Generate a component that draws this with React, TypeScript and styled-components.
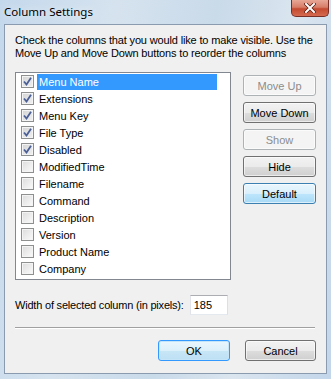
import React from "react"
import styled, { createGlobalStyle } from "styled-components"

const GlobalStyle = createGlobalStyle`
    html, body {
        margin: 0;
        padding: 0;
    }
    body {
        font-family: "Liberation Sans", Arial, sans-serif;
        font-size: 11px;
    }
`

const Frame = styled.div`
    width: 331px;
    height: 379px;
    box-sizing: border-box;
    display: flex;
    flex-direction: column;
    padding: 0 4px 5px 4px;
    background: linear-gradient(100deg, #c4d8ec 0%, #d6e3ef 30%, #c9dae9 55%, #dae5ef 75%, #c3d6ea 100%);
    overflow: hidden;
`

const TitleBar = styled.div`
    height: 24px;
    display: flex;
    justify-content: space-between;
    align-items: flex-start;
    flex-shrink: 0;
`

const Title = styled.span`
    font-family: "Noto Sans", "Open Sans", sans-serif;
    font-size: 11.5px;
    color: #000;
    margin-top: 4px;
    text-shadow: 0 0 8px rgba(255, 255, 255, 0.9);
`

const CloseButton = styled.div`
    width: 38px;
    height: 17px;
    margin-right: -2px;
    box-sizing: border-box;
    border: 1px solid #7a2f26;
    border-top: none;
    border-radius: 0 0 5px 5px;
    background: linear-gradient(#e8a796 0%, #d77d68 45%, #c44a30 55%, #d46a50 100%);
    display: flex;
    align-items: center;
    justify-content: center;
`

const Client = styled.div`
    flex: 1;
    min-height: 0;
    background: #f0f0f0;
    border: 1px solid #8a9bb0;
    display: flex;
    flex-direction: column;
    padding: 9px 10px 0 10px;
`

const Instructions = styled.p`
    margin: 0;
    font-size: 11px;
    line-height: 13px;
    letter-spacing: -0.15px;
    white-space: nowrap;
    color: #000;
`

const MainRow = styled.div`
    display: flex;
    gap: 12px;
    margin-top: 12px;
`

const ListBox = styled.div`
    width: 218px;
    height: 208px;
    box-sizing: border-box;
    background: #fff;
    border: 1px solid #828790;
    padding: 0 0 0 5px;
`

const Row = styled.div`
    height: 17px;
    display: flex;
    align-items: center;
`

const Box = styled.div<{ $checked?: boolean }>`
    width: 13px;
    height: 13px;
    box-sizing: border-box;
    border: 1px solid #8e8f8f;
    background: ${(p) =>
        p.$checked ? "linear-gradient(135deg, #d4d4d4, #f0f0f0)" : "linear-gradient(135deg, #dcdcdc, #fbfbfb)"};
    box-shadow: inset 0 0 0 1px #f4f4f4;
    display: flex;
    align-items: center;
    justify-content: center;
    flex-shrink: 0;
`

const Label = styled.span<{ $selected?: boolean }>`
    margin-left: 3px;
    padding: 0 2px;
    height: 16px;
    line-height: 16px;
    width: 176px;
    background: ${(p) => (p.$selected ? "#3399ff" : "transparent")};
    color: ${(p) => (p.$selected ? "#fff" : "#000")};
`

const ButtonColumn = styled.div`
    display: flex;
    flex-direction: column;
    gap: 6px;
    padding-top: 3px;
`

type Variant = "normal" | "disabled" | "hot" | "default"

const borders: Record<Variant, string> = {
    normal: "#707070",
    disabled: "#adb2b5",
    hot: "#3c7fb1",
    default: "#3399ff",
}

const fills: Record<Variant, string> = {
    normal: "linear-gradient(#f2f2f2 0%, #ebebeb 50%, #dddddd 51%, #cfcfcf 100%)",
    disabled: "#f4f4f4",
    hot: "linear-gradient(#eaf6fd 0%, #d9f0fc 50%, #bee6fd 51%, #a7d9f5 100%)",
    default: "linear-gradient(#eaf6fd 0%, #dcf0fb 50%, #c8e6f6 51%, #bde0f3 100%)",
}

const Button = styled.button<{ $variant?: Variant; $width?: number }>`
    width: ${(p) => p.$width ?? 73}px;
    height: 21px;
    box-sizing: border-box;
    font-family: "Liberation Sans", Arial, sans-serif;
    font-size: 11px;
    padding: 0;
    border-radius: 3px;
    border: 1px solid ${(p) => borders[p.$variant ?? "normal"]};
    color: ${(p) => (p.$variant === "disabled" ? "#8c8c8c" : "#000")};
    background: ${(p) => fills[p.$variant ?? "normal"]};
    box-shadow: inset 0 0 0 1px ${(p) => (p.$variant === "default" ? "#c6e4f8" : "rgba(255,255,255,0.6)")};
`

const WidthRow = styled.div`
    display: flex;
    align-items: center;
    margin-top: 15px;
    height: 20px;
`

const WidthLabel = styled.span`
    letter-spacing: -0.2px;
`

const WidthInput = styled.div`
    width: 38px;
    height: 20px;
    box-sizing: border-box;
    margin-left: 6px;
    background: #fff;
    border: 1px solid #abadb3;
    border-left-color: #e2e3ea;
    border-right-color: #dbdfe6;
    border-bottom-color: #e3e9ef;
    padding-left: 3px;
    line-height: 18px;
`

const Separator = styled.div`
    margin-top: 12px;
    height: 0;
    border-top: 1px solid #a0a0a0;
    border-bottom: 1px solid #fff;
    margin-right: 1px;
`

const Footer = styled.div`
    display: flex;
    justify-content: flex-end;
    gap: 15px;
    margin-top: 11px;
`

const columns = [
    { name: "Menu Name", checked: true },
    { name: "Extensions", checked: true },
    { name: "Menu Key", checked: true },
    { name: "File Type", checked: true },
    { name: "Disabled", checked: true },
    { name: "ModifiedTime", checked: false },
    { name: "Filename", checked: false },
    { name: "Command", checked: false },
    { name: "Description", checked: false },
    { name: "Version", checked: false },
    { name: "Product Name", checked: false },
    { name: "Company", checked: false },
]

function Check() {
    return (
        <svg width="9" height="9" viewBox="0 0 9 9">
            <path d="M1 4.5 L3.5 7.5 L8 0.8" fill="none" stroke="#4a5f97" strokeWidth="1.8" />
        </svg>
    )
}

export default function App() {
    return (
        <>
            <GlobalStyle />
            <Frame>
                <TitleBar>
                    <Title>Column Settings</Title>
                    <CloseButton>
                        <svg width="12" height="10" viewBox="0 0 12 10">
                            <path d="M2 1 L10 9 M10 1 L2 9" stroke="#5a1a10" strokeWidth="3.4" strokeLinecap="square" />
                            <path d="M2 1 L10 9 M10 1 L2 9" stroke="#fff" strokeWidth="2" strokeLinecap="square" />
                        </svg>
                    </CloseButton>
                </TitleBar>
                <Client>
                    <Instructions>
                        Check the columns that you would like to make visible. Use the
                        <br />
                        Move Up and Move Down buttons to reorder the columns
                    </Instructions>
                    <MainRow>
                        <ListBox>
                            {columns.map((c, i) => (
                                <Row key={c.name}>
                                    <Box $checked={c.checked}>{c.checked && <Check />}</Box>
                                    <Label $selected={i === 0}>{c.name}</Label>
                                </Row>
                            ))}
                        </ListBox>
                        <ButtonColumn>
                            <Button $variant="disabled">Move Up</Button>
                            <Button>Move Down</Button>
                            <Button $variant="disabled">Show</Button>
                            <Button>Hide</Button>
                            <Button $variant="hot">Default</Button>
                        </ButtonColumn>
                    </MainRow>
                    <WidthRow>
                        <WidthLabel>Width of selected column (in pixels):</WidthLabel>
                        <WidthInput>185</WidthInput>
                    </WidthRow>
                    <Separator />
                    <Footer>
                        <Button $variant="default" $width={72}>OK</Button>
                        <Button $width={71}>Cancel</Button>
                    </Footer>
                </Client>
            </Frame>
        </>
    )
}
